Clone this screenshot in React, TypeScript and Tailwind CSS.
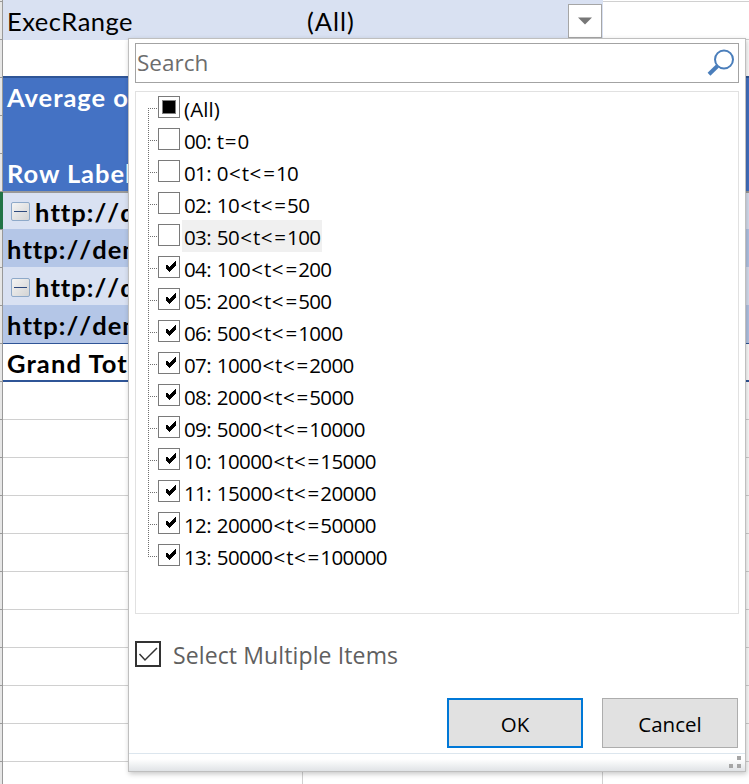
import type { ReactNode } from "react";

type State = "mixed" | "off" | "on";

const items: { label: string; state: State; hover?: boolean }[] = [
  { label: "(All)", state: "mixed" },
  { label: "00: t=0", state: "off" },
  { label: "01: 0<t<=10", state: "off" },
  { label: "02: 10<t<=50", state: "off" },
  { label: "03: 50<t<=100", state: "off", hover: true },
  { label: "04: 100<t<=200", state: "on" },
  { label: "05: 200<t<=500", state: "on" },
  { label: "06: 500<t<=1000", state: "on" },
  { label: "07: 1000<t<=2000", state: "on" },
  { label: "08: 2000<t<=5000", state: "on" },
  { label: "09: 5000<t<=10000", state: "on" },
  { label: "10: 10000<t<=15000", state: "on" },
  { label: "11: 15000<t<=20000", state: "on" },
  { label: "12: 20000<t<=50000", state: "on" },
  { label: "13: 50000<t<=100000", state: "on" },
];

const gutterRows = Array.from({ length: 20 }, (_, i) => i);
const emptyRows = Array.from({ length: 11 }, (_, i) => i);

/* Operators are set wider than the digits around them. */
function Label({ text }: { text: string }) {
  return (
    <span className={`whitespace-pre ${text === "(All)" ? "tracking-[0.1px]" : "tracking-[-0.62px] [word-spacing:1.2px]"}`}>
      {text.split(/([<=]+)/).map((part, i) =>
        /[<=]/.test(part) ? (
          <span key={i} className="-mr-[0.9px] pl-[1.1px] tracking-[1.9px]">{part}</span>
        ) : (
          part
        ),
      )}
    </span>
  );
}

function TreeBox({ state }: { state: State }) {
  return (
    <span className="flex size-[22px] shrink-0 items-center justify-center border border-[#7a7a7a] bg-white">
      {state === "mixed" && <span className="mb-px size-[14px] border border-[#808080] bg-black" />}
      {state === "on" && (
        <svg width="20" height="20" viewBox="0 0 20 20" shapeRendering="crispEdges">
          <path d="M7 8h1l2.5 2.5L16 4h1v4l-6 7h-1l-3-4z" fill="#000" />
        </svg>
      )}
    </span>
  );
}

function Collapse() {
  return (
    <span className="mr-[5px] mb-2 ml-1 flex size-[19px] shrink-0 items-center justify-center self-end rounded-[2px] border border-[#8ea9c9] bg-linear-to-br from-[#f4f4f4] to-[#d4d4d4]">
      <span className="h-px w-[13px] bg-[#2f4a7d]" />
    </span>
  );
}

function Row({ className, children }: { className: string; children?: ReactNode }) {
  return (
    <div className={`flex shrink-0 items-center overflow-hidden whitespace-pre pl-1 ${className}`}>{children}</div>
  );
}

function Url() {
  return <span className="pt-[2px] tracking-[1px] [font-kerning:none] [font-variant-ligatures:none]">http://demo</span>;
}

function Sheet() {
  return (
    <div className="flex h-full w-full">
      <div className="flex h-full w-[3px] shrink-0 flex-col bg-[#e6e6e6]">
        <div className="h-[2px] shrink-0 border-r border-b border-[#999]" />
        {gutterRows.map((i) => (
          <div
            key={i}
            className={`h-[38px] shrink-0 border-b border-[#999] ${i === 5 ? "bg-[#217346]" : "border-r"}`}
          />
        ))}
        <div className="grow border-r border-[#999]" />
      </div>
      <div className="flex min-w-0 grow flex-col font-['Lato','Carlito',sans-serif] text-[25.5px] font-bold text-black">
        <div className="flex h-10 shrink-0 font-normal">
          <div className="flex w-[600px] items-center bg-[#d9e1f2] pl-1">
            <span className="w-[300px] pt-[3px] tracking-[0.5px]">ExecRange</span>
            <span className="grow pt-[3px] tracking-[1px]">(All)</span>
            <span className="mt-[2px] mr-px flex size-[34px] items-center justify-center border border-[#a6a6a6] bg-white">
              <svg width="14" height="8" viewBox="0 0 14 8">
                <path d="M0 .5h14l-7 7z" fill="#777" />
              </svg>
            </span>
          </div>
          <div className="flex grow flex-col border-b border-[#d0d0d0]">
            <div className="h-[2px] border-b border-[#d0d0d0]" />
          </div>
        </div>
        <Row className="h-9" />
        <div className="flex h-[117px] shrink-0 flex-col justify-between border-t-2 border-b-2 border-t-[#2f5597] border-b-[#999] bg-[#4472c4] pl-1 tracking-[0.95px] text-white">
          <span className="h-[38px] leading-[39px]">Average of</span>
          <span className="h-[38px] leading-[40px]">Row Labels</span>
        </div>
        <Row className="h-9 bg-[#d9e1f2]"><Collapse /><Url /></Row>
        <Row className="h-[38px] bg-[#b4c6e7]"><Url /></Row>
        <Row className="h-[38px] bg-[#d9e1f2]"><Collapse /><Url /></Row>
        <Row className="h-[39px] border-b border-[#2f5597] bg-[#b4c6e7]"><Url /></Row>
        <Row className="h-[38px] border-b-2 border-[#2f5597]"><span className="pt-[3px] tracking-[1.1px]">Grand Total</span></Row>
        {emptyRows.map((i) => (
          <div key={i} className="flex h-[38px] shrink-0 border-b border-[#d0d0d0]">
            <div className="w-[300px] border-r border-[#d0d0d0]" />
            <div className="w-[300px] border-r border-[#d0d0d0]" />
          </div>
        ))}
      </div>
    </div>
  );
}

function FilterPanel() {
  return (
    <div className="absolute top-[38px] left-[128px] flex h-[734px] w-[618px] flex-col border border-[#bfbfbf] bg-white font-['Open_Sans','Noto_Sans',sans-serif] text-black shadow-[1px_2px_5px_rgba(0,0,0,0.22)]">
      <div className="mx-[6px] mt-1 flex h-10 shrink-0 items-center justify-between border border-[#a3a3a3] pr-[3px] pl-px text-[#6d6d6d]">
        <span className="pt-px text-[22.5px] leading-none">Search</span>
        <svg width="30" height="30" viewBox="0 0 30 30" fill="none" stroke="#4a7ebb">
          <circle cx="19" cy="11.5" r="9" strokeWidth="2" />
          <path d="M12.5 18 4 26.3" strokeWidth="4" />
        </svg>
      </div>

      <div className="mx-[6px] mt-2 flex h-[523px] shrink-0 flex-col border border-[#e1e1e1] pl-3">
        {items.map((it, i) => (
          <div key={it.label} className="flex h-8 shrink-0 items-start">
            <svg width="9" height="32" className="shrink-0" shapeRendering="crispEdges" stroke="#6e6e6e">
              <path d={i === 0 ? "M.5 16V32" : i === items.length - 1 ? "M.5 0V17" : "M.5 0V32"} strokeDasharray="1 1" />
              <path d="M0 16.5H9" strokeDasharray="1 1" />
            </svg>
            <span className="pt-1 pl-px"><TreeBox state={it.state} /></span>
            <span className={`ml-[2px] flex h-8 items-center pr-[2px] pl-[2px] text-[20.5px] leading-8 ${it.hover ? "bg-[#f0f0f0]" : ""}`}>
              <span className="pt-px"><Label text={it.label} /></span>
            </span>
          </div>
        ))}
      </div>

      <div className="mt-[27px] ml-[6px] flex h-[26px] shrink-0 items-center">
        <span className="flex size-[26px] items-center justify-center border-2 border-[#333]">
          <svg width="22" height="22" viewBox="0 0 22 22" fill="none" stroke="#333" strokeWidth="1.5">
            <path d="m2.5 11 5.5 6L20 5" />
          </svg>
        </span>
        <span className="ml-3 pt-[3px] text-[23px] leading-none tracking-[0.12px] text-[#606060]">Select Multiple Items</span>
      </div>

      <div className="mt-[31px] mr-[7px] flex h-[50px] shrink-0 justify-end gap-[19px] text-[20.5px]">
        <button className="w-[136px] border-2 border-[#0078d7] bg-[#e1e1e1] pt-[2px]">OK</button>
        <button className="w-[136px] border border-[#adadad] bg-[#e1e1e1] pt-[2px]">Cancel</button>
      </div>

      <div className="mt-[5px] flex grow items-start justify-end border-t border-[#dce6ee] bg-linear-to-b from-white from-30% to-[#e0e3e6] pt-[2px] pr-1">
        <div className="grid grid-cols-2 gap-1">
          <i className="col-start-2 size-1 bg-[#a6a6a6]" />
          <i className="col-start-1 size-1 bg-[#a6a6a6]" />
          <i className="size-1 bg-[#a6a6a6]" />
        </div>
      </div>
    </div>
  );
}

export default function App() {
  return (
    <div className="relative h-[784px] w-[749px] overflow-hidden bg-white">
      <Sheet />
      <FilterPanel />
    </div>
  );
}
